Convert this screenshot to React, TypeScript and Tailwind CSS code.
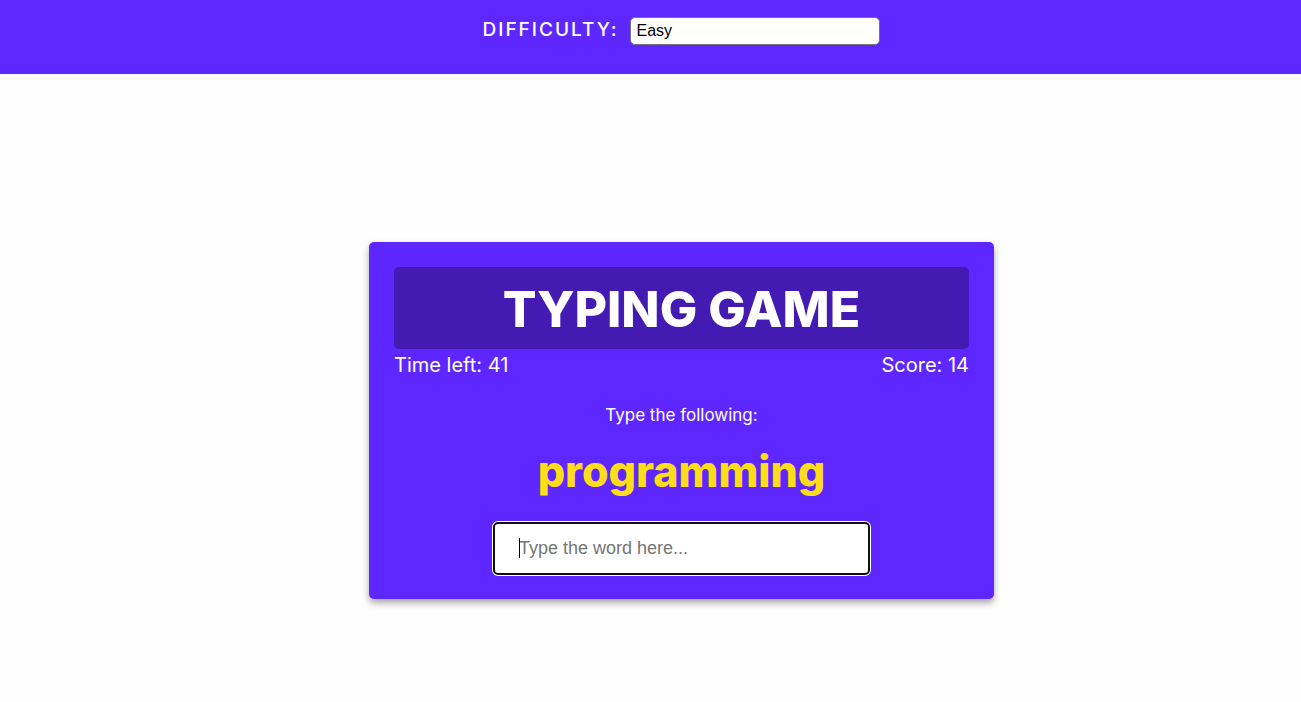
import { useState } from "react";

const word = "programming";

function DifficultyBar() {
  const [difficulty, setDifficulty] = useState("easy");

  return (
    <header className="bg-[#5f27ff] pl-[62px]">
      <form className="flex h-[74px] items-start justify-center gap-3 pt-[17px]">
        <label
          htmlFor="difficulty"
          className="text-[19px] leading-[26px] font-medium tracking-[2px] text-white uppercase"
        >
          Difficulty:
        </label>
        <select
          id="difficulty"
          value={difficulty}
          onChange={(e) => setDifficulty(e.target.value)}
          className="h-7 w-[250px] appearance-none rounded-[5px] border border-[#767676] bg-white px-[5px] font-['Liberation_Sans',Arial,sans-serif] text-base leading-6 text-black"
        >
          <option value="easy">Easy</option>
          <option value="medium">Medium</option>
          <option value="hard">Hard</option>
        </select>
      </form>
    </header>
  );
}

function GameCard() {
  const [typed, setTyped] = useState("");

  return (
    <section className="w-full max-w-[625px] rounded-[5px] bg-[#5f27ff] px-[25px] pt-[25px] pb-6 text-center text-white shadow-[0_4px_7px_rgba(0,0,0,0.35)]">
      <h1 className="rounded-[5px] bg-[#431ab2] pt-[13px] pb-[11px] text-[50px] leading-[58px] font-extrabold uppercase">
        Typing Game
      </h1>
      <div className="flex justify-between text-xl leading-8">
        <p>Time left: 41</p>
        <p>Score: 14</p>
      </div>
      <p className="mt-[22px] text-[17px] leading-6">Type the following:</p>
      <h2 className="mt-3 text-[43px] leading-[64px] font-extrabold text-[#ffdd19]">{word}</h2>
      <div className="relative mx-auto mt-[19px] w-full max-w-[377px]">
        <input
          type="text"
          aria-label="Type the word here"
          placeholder="Type the word here..."
          autoComplete="off"
          value={typed}
          onChange={(e) => setTyped(e.target.value)}
          className="block h-[53px] w-full rounded-[5px] border-2 border-[#101010] bg-white px-6 font-['Liberation_Sans',Arial,sans-serif] text-lg text-black caret-transparent ring-1 ring-white outline-none placeholder:text-[#757575]"
        />
        <span className="absolute top-4 left-[26px] h-5 w-px bg-black" />
      </div>
    </section>
  );
}

export default function App() {
  return (
    <div className="min-h-screen bg-[#fefefe] font-[Inter,sans-serif]">
      <DifficultyBar />
      <main className="flex justify-center pt-[168px] pl-[62px]">
        <GameCard />
      </main>
    </div>
  );
}
